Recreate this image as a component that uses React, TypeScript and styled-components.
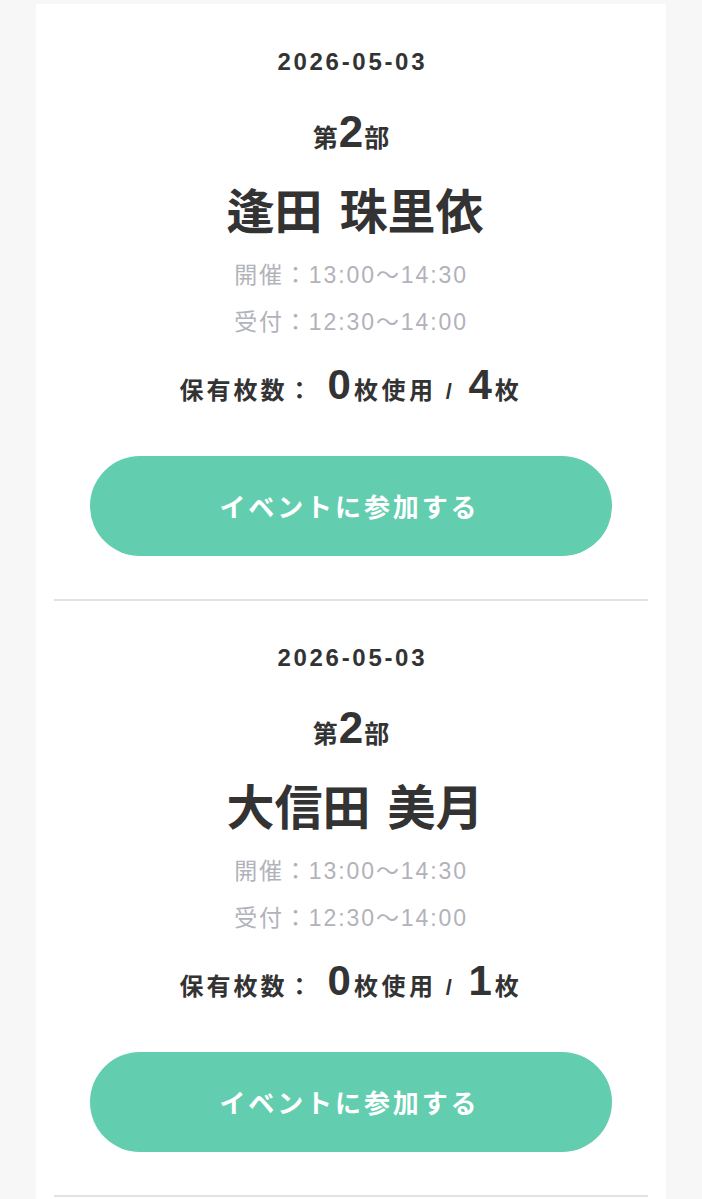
import { FC } from 'react';
import styled, { createGlobalStyle } from 'styled-components';

const GlobalStyle = createGlobalStyle`
  html, body {
    margin: 0;
    padding: 0;
    background: #f7f7f7;
  }
  body {
    font-family: "Liberation Sans", "Noto Sans CJK JP", sans-serif;
    color: #333;
  }
`

const Card = styled.main`
  width: 630px;
  margin: 4px auto 0;
  background: #fff;
  padding: 0 18px;
  box-sizing: border-box;
  min-height: 1200px;
`

const Ticket = styled.section`
  display: flex;
  flex-direction: column;
  align-items: center;
  padding-top: 43px;
  border-bottom: 2px solid #e2e2e2;
  & + & {
    padding-top: 42px;
  }
`

const DateText = styled.div`
  font: 700 24px/30px "Liberation Sans", "Noto Sans CJK JP", sans-serif;
  letter-spacing: 2.7px;
  padding-left: 2.7px;
`

const Part = styled.div`
  margin-top: 33px;
  font: 700 25px/44px "Noto Sans CJK JP", sans-serif;
  .num {
    font: 700 44px/44px "Liberation Sans", sans-serif;
    margin: 0 1px;
  }
`

const Name = styled.h2`
  margin: 22px 0 0 8px;
  font: 700 48px/56px "Noto Sans CJK JP", sans-serif;
  letter-spacing: 0;
  word-spacing: 6px;
`

const Times = styled.div`
  margin-top: 15.5px;
  display: flex;
  flex-direction: column;
  align-items: center;
`

const TimeRow = styled.div`
  font: 400 23px/47px "Liberation Sans", "Noto Sans CJK JP", sans-serif;
  color: #b2b2ba;
  letter-spacing: 1.9px;
`

const Count = styled.div`
  margin-top: 14px;
  font: 700 24px/50px "Noto Sans CJK JP", sans-serif;
  letter-spacing: 3.6px;
  .label {
    letter-spacing: 3px;
  }
  .big {
    font: 700 42px/50px "Liberation Sans", sans-serif;
    letter-spacing: 0;
    margin: 0 3px 0 13px;
  }
  .slash {
    font: 700 22px/50px "Liberation Sans", sans-serif;
    margin: 0 0 0 9px;
  }
`

const JoinButton = styled.button`
  margin: 39.5px 0 43px;
  width: 522px;
  height: 100px;
  border: none;
  border-radius: 50px;
  background: #63cdaf;
  color: #fff;
  font: 700 26px/1 "Noto Sans CJK JP", sans-serif;
  letter-spacing: 2.9px;
  padding-left: 2.9px;
  cursor: pointer;
`

type EventItem = { date: string; part: number; name: string; open: string; reception: string; used: number; total: number }

const events: EventItem[] = [
  { date: '2026-05-03', part: 2, name: '逢田 珠里依', open: '13:00〜14:30', reception: '12:30〜14:00', used: 0, total: 4 },
  { date: '2026-05-03', part: 2, name: '大信田 美月', open: '13:00〜14:30', reception: '12:30〜14:00', used: 0, total: 1 },
]

const EventTicket: FC<{ item: EventItem }> = ({ item }) => (
  <Ticket>
    <DateText>{item.date}</DateText>
    <Part>第<span className="num">{item.part}</span>部</Part>
    <Name>{item.name}</Name>
    <Times>
      <TimeRow>開催：{item.open}</TimeRow>
      <TimeRow>受付：{item.reception}</TimeRow>
    </Times>
    <Count>
      <span className="label">保有枚数：</span>
      <span className="big">{item.used}</span>枚使用
      <span className="slash">/</span>
      <span className="big">{item.total}</span>枚
    </Count>
    <JoinButton>イベントに参加する</JoinButton>
  </Ticket>
)

export default function App() {
  return (
    <>
      <GlobalStyle />
      <Card>
        {events.map((e, i) => (
          <EventTicket key={i} item={e} />
        ))}
      </Card>
    </>
  )
}
